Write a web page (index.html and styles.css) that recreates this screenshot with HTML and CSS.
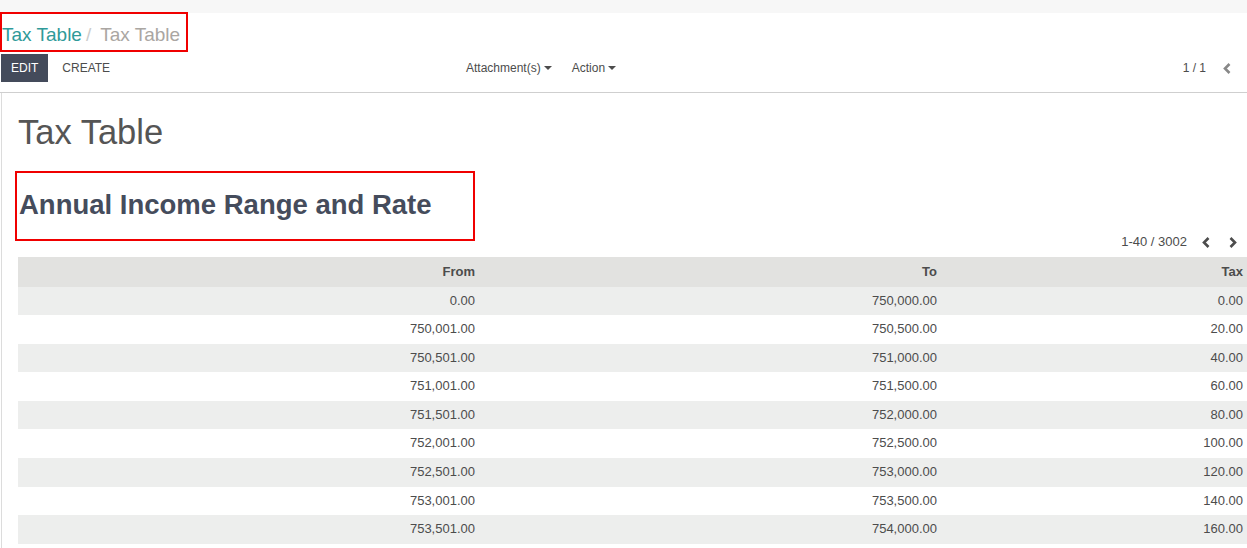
FILE: index.html
```html
<!DOCTYPE html>
<html>
<head>
<meta charset="utf-8">
<link rel="stylesheet" href="styles.css">
</head>
<body>
<div class="topstrip"></div>
<div class="control-panel">
  <div class="breadcrumb">
    <a class="crumb-link">Tax Table</a><span class="crumb-sep">/</span><span class="crumb-active">Tax Table</span>
  </div>
  <div class="cp-row">
    <div class="cp-buttons">
      <button class="btn btn-primary">EDIT</button>
      <button class="btn btn-plain">CREATE</button>
    </div>
    <div class="cp-sidebar">
      <button class="btn btn-plain">Attachment(s)<span class="caret"></span></button>
      <button class="btn btn-plain">Action<span class="caret"></span></button>
    </div>
    <div class="cp-pager">
      <span class="pager-value">1 / 1</span>
      <span class="pager-btn">
        <svg width="8" height="11" viewBox="0 0 8 11"><path d="M6.5 1 L2 5.5 L6.5 10" fill="none" stroke="#888" stroke-width="2.6"/></svg>
      </span>
    </div>
  </div>
</div>
<div class="content">
  <h1 class="title">Tax Table</h1>
  <div class="section-box">
    <h2 class="section-title">Annual Income Range and Rate</h2>
  </div>
  <div class="list-pager">
    <span class="pager-value">1-40 / 3002</span>
    <span class="pager-btn">
      <svg width="8" height="11" viewBox="0 0 8 11"><path d="M6.5 1 L2 5.5 L6.5 10" fill="none" stroke="#4c4c4c" stroke-width="2.6"/></svg>
    </span>
    <span class="pager-btn">
      <svg width="8" height="11" viewBox="0 0 8 11"><path d="M1.5 1 L6 5.5 L1.5 10" fill="none" stroke="#4c4c4c" stroke-width="2.6"/></svg>
    </span>
  </div>
  <table class="list">
    <colgroup><col class="c1"><col class="c2"><col class="c3"></colgroup>
    <thead>
      <tr><th>From</th><th>To</th><th>Tax</th></tr>
    </thead>
    <tbody>
      <tr><td>0.00</td><td>750,000.00</td><td>0.00</td></tr>
      <tr><td>750,001.00</td><td>750,500.00</td><td>20.00</td></tr>
      <tr><td>750,501.00</td><td>751,000.00</td><td>40.00</td></tr>
      <tr><td>751,001.00</td><td>751,500.00</td><td>60.00</td></tr>
      <tr><td>751,501.00</td><td>752,000.00</td><td>80.00</td></tr>
      <tr><td>752,001.00</td><td>752,500.00</td><td>100.00</td></tr>
      <tr><td>752,501.00</td><td>753,000.00</td><td>120.00</td></tr>
      <tr><td>753,001.00</td><td>753,500.00</td><td>140.00</td></tr>
      <tr><td>753,501.00</td><td>754,000.00</td><td>160.00</td></tr>
    </tbody>
  </table>
</div>
</body>
</html>
```

FILE: styles.css
```css
html, body {
  margin: 0;
  padding: 0;
  background: #fff;
  overflow: hidden;
}
body {
  font-family: "Liberation Sans", Arial, sans-serif;
  color: #4c4c4c;
  width: 1247px;
  height: 548px;
}
.topstrip {
  height: 13px;
  background: #f7f7f7;
}
.control-panel {
  border-bottom: 1px solid #cfcfcf;
  padding-bottom: 10px;
}
.breadcrumb {
  display: inline-block;
  margin-top: -1px;
  border: 2px solid #f00000;
  box-sizing: border-box;
  height: 40px;
  padding: 8px 6px 0 0;
  line-height: 26px;
  font-size: 19px;
  white-space: nowrap;
}
.crumb-link {
  color: #2f9a99;
}
.crumb-sep {
  color: #cccccc;
  padding: 0 5px 0 4px;
  margin-right: 4px;
}
.crumb-active {
  color: #aaa6a2;
}
.cp-row {
  display: flex;
  align-items: center;
  margin-top: 2px;
  height: 28px;
}
.cp-buttons {
  flex: 0 0 456px;
  display: flex;
  gap: 4px;
  padding-left: 1px;
  box-sizing: border-box;
}
.btn {
  font-family: "Liberation Sans", Arial, sans-serif;
  font-size: 12px;
  line-height: 18px;
  padding: 5px 10px;
  border: 0;
  margin: 0;
  background: transparent;
  color: #4c4c4c;
  cursor: pointer;
}
.btn-primary {
  background: #444b5b;
  color: #fff;
}
.cp-sidebar {
  display: flex;
}
.caret {
  display: inline-block;
  width: 0;
  height: 0;
  margin-left: 3px;
  vertical-align: middle;
  border-top: 4px solid #4c4c4c;
  border-left: 4px solid transparent;
  border-right: 4px solid transparent;
  position: relative;
  top: -1px;
}
.cp-pager {
  margin-left: auto;
  display: flex;
  align-items: center;
  padding-right: 16px;
  font-size: 12px;
}
.cp-pager .pager-value {
  margin-right: 17px;
}
.pager-btn {
  display: inline-flex;
  align-items: center;
}
.content {
  margin-left: 1px;
  border-left: 1px solid #dcdcdc;
  padding-left: 16px;
  height: 460px;
}
.title {
  margin: 0;
  padding-top: 20px;
  font-size: 34.5px;
  font-weight: normal;
  line-height: 38px;
  color: #555;
}
.section-box {
  margin-top: 20px;
  margin-left: -3px;
  width: 460px;
  height: 70px;
  box-sizing: border-box;
  border: 2px solid #f00000;
  padding: 17px 0 0 2px;
}
.section-title {
  margin: 0;
  font-size: 27.5px;
  line-height: 30px;
  font-weight: bold;
  color: #454c5c;
  white-space: nowrap;
}
.list-pager {
  margin-top: -8px;
  height: 18px;
  display: flex;
  justify-content: flex-end;
  align-items: center;
  font-size: 13px;
  line-height: 18px;
  width: 1229px;
  padding-right: 10px;
  box-sizing: border-box;
}
.list-pager .pager-value {
  margin-right: 15px;
}
.list-pager .pager-btn + .pager-btn {
  margin-left: 19px;
}
.list {
  margin-top: 6px;
  border-collapse: collapse;
  table-layout: fixed;
  width: 1230px;
  font-size: 13px;
  line-height: 1.42857;
}
.c1 { width: 462px; }
.c2 { width: 462px; }
.c3 { width: 306px; }
.list th, .list td {
  padding: 5px;
  text-align: right;
  white-space: nowrap;
}
.list th {
  font-weight: bold;
  background: #e2e2e0;
  color: #4c4c4c;
  padding-top: 6px;
  padding-bottom: 5px;
}
.list tbody tr:nth-child(odd) td {
  background: #edeeed;
}
```
